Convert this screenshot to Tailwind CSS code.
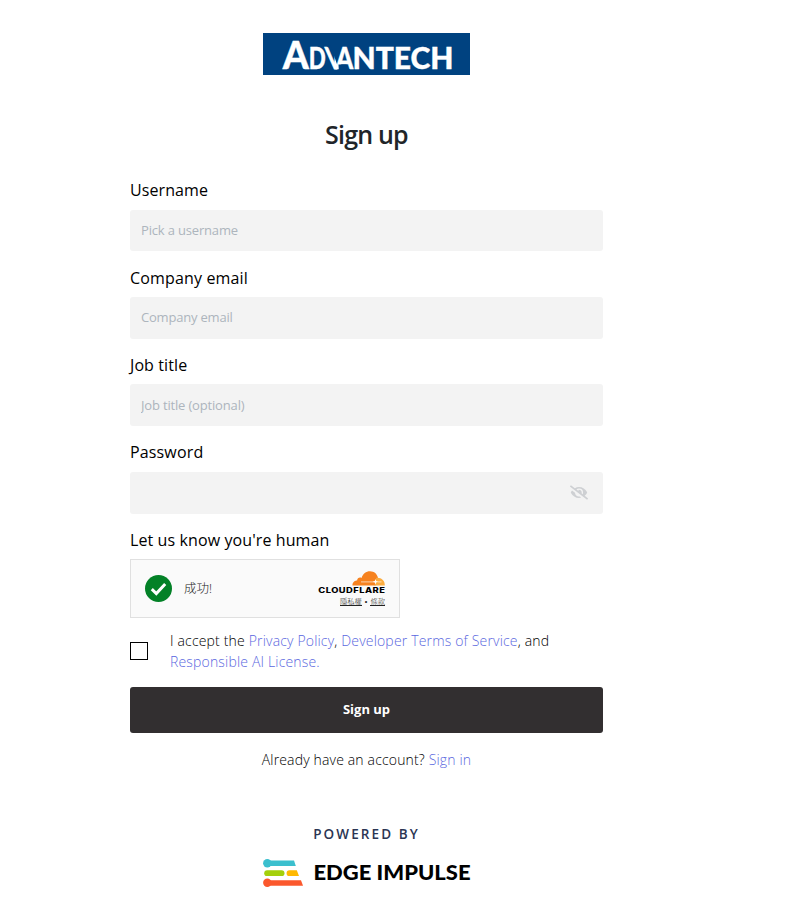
<!DOCTYPE html>
<html lang="en">
<head>
    <meta charset="UTF-8">
    <meta name="viewport" content="width=device-width, initial-scale=1.0">
    <title>Sign up - Edge Impulse</title>
    <script src="https://cdn.jsdelivr.net/npm/@tailwindcss/browser@4"></script>
</head>
<body class="bg-white text-black font-['Open_Sans','Noto_Sans_CJK_TC',sans-serif]">
    <main class="ml-[130px] w-[473px] pt-[33px] flex flex-col">
        <!-- Partner logo -->
        <svg class="self-center w-[207px] h-[42px] overflow-visible" viewBox="0 0 207 42" role="img" aria-label="Advantech">
            <rect width="207" height="42" fill="#004280"/>
            <g fill="#fff" stroke="#fff" stroke-width=".4" font-family="Lato" font-weight="900">
                <text x="19.800" y="36" font-size="37" textLength="26" lengthAdjust="spacingAndGlyphs">A</text>
                <text x="45.800" y="36" font-size="30" textLength="17" lengthAdjust="spacingAndGlyphs">D</text>
                <text transform="translate(63 36) skewX(10)" x="2.500" y="0" font-size="30" stroke-width=".8" textLength="14" lengthAdjust="spacingAndGlyphs">V</text>
            </g>
            <!-- leaves only the left arm of the V -->
            <path d="M67.300 12H82v25h-6z" fill="#004280"/>
            <g fill="#fff" stroke="#fff" stroke-width=".4" font-family="Lato" font-weight="900">
                <text x="72.800" y="36" font-size="30" textLength="17.500" lengthAdjust="spacingAndGlyphs">A</text>
                <text x="89.500" y="36" font-size="30" textLength="101" lengthAdjust="spacingAndGlyphs">NTECH</text>
            </g>
            <path d="M75.500 31.400h8l1.300 6h-9z" fill="#004280"/>
        </svg>

        <h1 class="mt-[41px] text-center text-[25px] leading-9 font-semibold tracking-[-0.8px] text-[#212529]">Sign up</h1>

        <form class="mt-[26px]">
            <div class="mb-[14px]">
                <label for="username" class="block text-base leading-6 tracking-[0.1px]">Username</label>
                <input id="username" type="text" placeholder="Pick a username" class="mt-2 block w-full h-[41.4px] rounded-[3px] bg-[#f3f3f3] px-[11px] pb-0.5 text-[13px] tracking-[-0.17px] placeholder:text-[#adb5bd]">
            </div>
            <div class="mb-[14px]">
                <label for="email" class="block pt-0.5 text-base leading-[22px] pt-[1.6px] pb-[0.4px] tracking-[0.15px]">Company email</label>
                <input id="email" type="text" placeholder="Company email" class="mt-2 block w-full h-[41.4px] rounded-[3px] bg-[#f3f3f3] px-[11px] pb-0.5 text-[13px] tracking-[-0.2px] placeholder:text-[#adb5bd]">
            </div>
            <div class="mb-[14px]">
                <label for="job" class="block text-base leading-6 tracking-[0.1px]">Job title</label>
                <input id="job" type="text" placeholder="Job title (optional)" class="mt-[7.5px] block w-full h-[41.9px] rounded-[3px] bg-[#f3f3f3] px-[11px] text-[13px] tracking-[-0.17px] placeholder:text-[#adb5bd]">
            </div>
            <div class="mb-[14px]">
                <label for="password" class="block text-base leading-6 tracking-[0.15px]">Password</label>
                <div class="mt-2 flex h-[41.4px] items-center rounded-[3px] bg-[#f3f3f3] pl-[11px] pr-[15px]">
                    <input id="password" type="password" class="min-w-0 flex-1 text-[13px]">
                    <svg class="w-[18px] h-[15px]" viewBox="0 0 640 512" fill="#ced0d3">
                        <path d="M320 400c-75.850 0-137.250-58.710-142.900-133.110L72.200 185.820c-13.790 17.300-26.480 35.590-36.720 55.590a32.350 32.350 0 0 0 0 29.190C89.710 376.410 197.070 448 320 448c26.910 0 52.870-4 77.890-10.460L346 397.390a144.130 144.130 0 0 1-26 2.610zm313.820 58.100l-110.550-85.440a331.250 331.250 0 0 0 81.250-102.070 32.350 32.350 0 0 0 0-29.190C550.290 135.590 442.930 64 320 64a308.150 308.150 0 0 0-147.320 37.700L45.460 3.370A16 16 0 0 0 23 6.180L3.370 31.450A16 16 0 0 0 6.180 53.900l588.360 454.730a16 16 0 0 0 22.460-2.810l19.640-25.270a16 16 0 0 0-2.820-22.450zM450.220 316.090l-39.300-30.370A94.750 94.750 0 0 0 416 256a94.760 94.760 0 0 0-121.310-92.210A47.650 47.650 0 0 1 304 192a46.640 46.640 0 0 1-1.540 10l-73.610-56.890A142.310 142.310 0 0 1 320 112a143.920 143.920 0 0 1 144 144c0 21.630-5.290 41.790-13.780 60.110z"/>
                    </svg>
                </div>
            </div>

            <!-- Turnstile -->
            <div class="text-base leading-6 tracking-[0.1px]">Let us know you're human</div>
            <div class="mt-[7.4px] flex w-[270px] h-[59px] items-center border border-[#e0e0e0] bg-[#fafafa] pl-[14px] pr-[14px] text-[#232323]">
                <svg class="w-[27px] h-[27px]" viewBox="0 0 27 27">
                    <circle cx="13.500" cy="13.500" r="13.500" fill="#038127"/>
                    <path d="M6.800 14.200l4.500 4.300 8.900-9.600" fill="none" stroke="#fff" stroke-width="3"/>
                </svg>
                <span class="ml-3 mt-0.5 text-[12.5px] leading-5 font-light">成功!</span>
                <div class="ml-auto flex w-[68px] flex-col items-end">
                    <svg class="w-[68px] h-[25px] overflow-visible" viewBox="0 0 68 25">
                        <path d="M35.500 15.500c-.3-3 2.100-5.200 4.600-5.100.1-2.300 2.600-3.600 4.400-2.400C45.900 3.600 49 1.200 53 1.200c4.300 0 7.100 2.900 7.900 6.300l-2.400 8z" fill="#f6821f"/>
                        <path d="M57.500 15.500l1-3.300.6-4.400c5-.7 9 2.600 8.700 7.700z" fill="#fbad41"/>
                        <path d="M44 11.900h13.500M60.500 11.900h4" stroke="#fff" stroke-width=".65"/>
                        <path d="M58.500 9l.7 2 2 .8-2 .7-.7 2-.8-2-2-.7 2-.8z" fill="#fff"/>
                        <g transform="translate(1.300 23.300) scale(1.350 1)">
                            <text font-family="Inter" font-weight="800" font-size="6.900" fill="#000" textLength="49.300" lengthAdjust="spacing">CLOUDFLARE</text>
                        </g>
                    </svg>
                    <div class="mt-0.5 flex text-[7.300px] leading-[9px] font-light">
                        <span class="border-b border-current leading-[8px]">隱私權</span>
                        <span class="mx-[3px] font-['Liberation_Sans']">•</span>
                        <span class="border-b border-current leading-[8px]">條款</span>
                    </div>
                </div>
            </div>

            <div class="mt-[12px] flex items-center text-[14px] leading-[21px] font-light">
                <input id="accept" type="checkbox" class="w-[18px] h-[18px] shrink-0 appearance-none border border-black">
                <label for="accept" class="ml-[22px] w-[400px] tracking-[0.17px]">I accept the <a href="#" class="text-[#5a67e0]">Privacy Policy</a>, <a href="#" class="text-[#5a67e0]">Developer Terms of Service</a>, and <a href="#" class="text-[#5a67e0]">Responsible AI License.</a></label>
            </div>

            <button type="submit" class="mt-[15px] block h-[46px] w-full rounded-[3px] bg-[#322f30] text-[13px] font-bold text-white">Sign up</button>
        </form>

        <p class="mt-4 text-center text-[14px] leading-[21px] font-light tracking-[0.16px]">Already have an account? <a href="#" class="text-[#5a67e0]">Sign in</a></p>

        <div class="mt-[54px] text-center text-[13.5px] leading-[21px] font-semibold tracking-[2.1px] text-[#2b3553]">POWERED BY</div>
        <svg class="mt-[13px] self-center w-[208px] h-[30px]" viewBox="0 0 208 30">
            <g fill="#3bbfce">
                <circle cx="4.300" cy="5.200" r="4.200"/>
                <path d="M4 2.500h27l1.800 5.400H4z"/>
            </g>
            <rect x="1.200" y="12.200" width="20.300" height="5.900" rx="2.950" fill="#a4d00b"/>
            <path d="M26.500 12.200h7.300l2.200 5.900h-9.500a2.950 2.950 0 0 1 0-5.900z" fill="#ffb901"/>
            <g fill="#fb582d">
                <circle cx="4.300" cy="24.800" r="4.200"/>
                <path d="M4 22.200h34l2 5.500H4z"/>
            </g>
            <text x="50.500" y="22.400" font-family="Lato" font-weight="900" font-size="20" textLength="157" lengthAdjust="spacingAndGlyphs">EDGE IMPULSE</text>
        </svg>
    </main>
</body>
</html>
